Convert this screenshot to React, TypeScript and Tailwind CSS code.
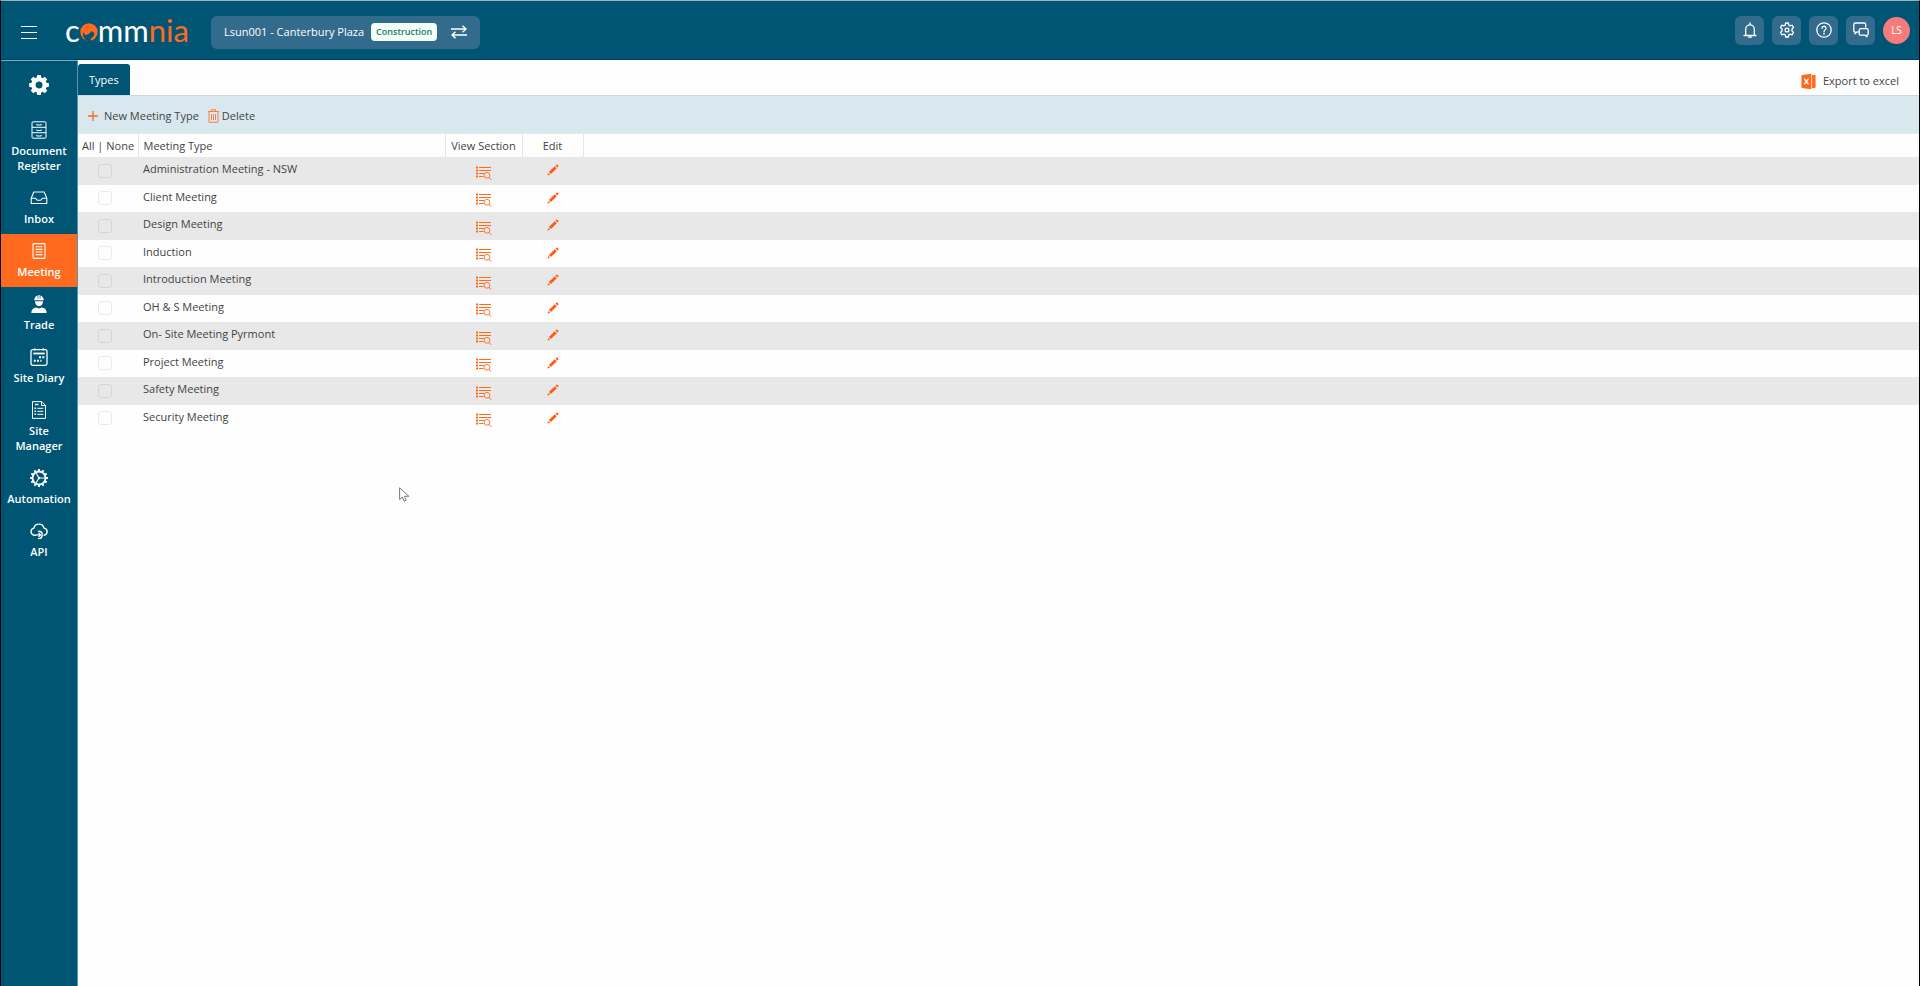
import type { ReactNode } from 'react'
import { RiFileExcel2Fill } from 'react-icons/ri'

interface NavItem { label: string; icon: ReactNode; active?: boolean }

const MEETING_TYPES = [
  'Administration Meeting - NSW',
  'Client Meeting',
  'Design Meeting',
  'Induction',
  'Introduction Meeting',
  'OH & S Meeting',
  'On- Site Meeting Pyrmont',
  'Project Meeting',
  'Safety Meeting',
  'Security Meeting',
]

const TEETH_8 = [0, 45, 90, 135, 180, 225, 270, 315]
const TEETH_12 = [0, 30, 60, 90, 120, 150, 180, 210, 240, 270, 300, 330]

function GearIcon() {
  return (
    <svg viewBox="0 0 20 20" className="size-5" fill="none" stroke="currentColor">
      <circle cx="10" cy="10" r="5.6" strokeWidth="4.2" />
      {TEETH_8.map(a => <path key={a} d="M7.6 3.4 8.2 0.1h3.6L12.4 3.4z" fill="currentColor" stroke="none" transform={`rotate(${a} 10 10)`} />)}
    </svg>
  )
}

function CabinetIcon() {
  return (
    <svg viewBox="0 0 18 18" className="size-[18px]" fill="none" stroke="currentColor" strokeWidth="1">
      <rect x="2" y="0.8" width="14" height="16.4" rx="1" />
      <path d="M2 6.3h14M2 11.7h14M6.8 3v1h4.4V3M6.8 8.5v1h4.4v-1M6.8 14v1h4.4v-1" />
    </svg>
  )
}

function InboxIcon() {
  return (
    <svg viewBox="0 0 18 18" className="size-[18px]" fill="none" stroke="currentColor" strokeWidth="1.1" strokeLinejoin="round">
      <path d="M3.8 3h10.4l2.6 6.2v5.3H1.2V9.2z" />
      <path d="M1.2 9.2h4.3c.4 0 .5.3.6.7.3 1 .9 1.4 1.7 1.4h2.4c.8 0 1.4-.4 1.7-1.4.1-.4.2-.7.6-.7h4.3" />
    </svg>
  )
}

function MeetingIcon() {
  return (
    <svg viewBox="0 0 18 18" className="size-[18px]" fill="none" stroke="currentColor" strokeWidth="1.1">
      <rect x="3" y="1.6" width="12" height="14.8" rx="0.8" />
      <path d="M5.6 4.8h6.8M5.6 7.4h6.8M5.6 10h6.8M5.6 12.6h6.8" />
    </svg>
  )
}

function TradeIcon() {
  return (
    <svg viewBox="0 0 18 18" className="size-[18px]" fill="currentColor">
      <path d="M4.2 5.2C4.3 2.8 5.7 1 7.6.5v3h.7V0h1.4v3.5h.7v-3c1.9.5 3.300 2.300 3.400 4.700z" />
      <path d="M5 6.300h8c0 2.700-1.600 4.900-4 4.900s-4-2.200-4-4.900z" />
      <path d="M1.300 18c0-3.300 2-5.200 5.200-5.400.7.5 1.500.8 2.500.8s1.800-.3 2.500-.8c3.200.2 5.200 2.100 5.200 5.400z" />
    </svg>
  )
}

function DiaryIcon() {
  return (
    <svg viewBox="0 0 18 18" className="size-[18px]" fill="none" stroke="currentColor" strokeWidth="1.3">
      <rect x="1" y="1.7" width="16" height="15.6" rx="1.8" />
      <path d="M3.3 5.500h11.400" strokeWidth="1.8" />
      <path d="M4.800 0v2.600M13.200 0v2.600" strokeWidth="1" />
      <path d="M9 9.200h2M12.300 9.200h2M3.800 12.700h2M7 12.700h2M10.300 12.700h1.200" strokeWidth="1.9" />
    </svg>
  )
}

function SiteManagerIcon() {
  return (
    <svg viewBox="0 0 18 18" className="size-[18px]" fill="none" stroke="currentColor" strokeWidth="1">
      <path d="M2.500.6h9.300l3.700 3.700v13.100h-13zM11.500.6v4h4" />
      <path d="M7.300 7.300h6M7.300 10.300h6M7.300 13.300h6" />
      <path d="M4.400 7.300h1.700M4.400 10.300h1.700M4.400 13.300h1.700M5 3.500h3.500" strokeWidth="1.5" />
    </svg>
  )
}

function AutomationIcon() {
  return (
    <svg viewBox="0 0 18 18" className="size-[18px]" fill="none" stroke="currentColor">
      <circle cx="9" cy="9" r="6.5" strokeWidth="1.9" />
      {TEETH_12.map(a => <path key={a} d="M9 .1v2" strokeWidth="2" transform={`rotate(${a} 9 9)`} />)}
      <circle cx="9" cy="9" r="1.2" fill="currentColor" stroke="none" />
      <path d="M9 9h5.500M9 9 6.200 4.200M9 9l-2.800 4.800" strokeWidth="1.1" />
    </svg>
  )
}

function ApiIcon() {
  return (
    <svg viewBox="0 0 18 18" className="size-[18px]" fill="none" stroke="currentColor" strokeWidth="1.4" strokeLinecap="round">
      <path d="M5.800 13.200H4.300A3.600 3.600 0 0 1 3.900 6.100 5.200 5.200 0 0 1 14 6.100a3.600 3.600 0 0 1 .2 7.100" />
      <path d="M8.600 9.300c2.300 0 3.600 1.300 3.600 3.400s-1.300 3.800-3.600 3.800" />
      <path d="M6.600 12.900h3.800M8.900 11.200l1.700 1.700-1.700 1.700" strokeWidth="1.2" />
    </svg>
  )
}

const NAV: NavItem[] = [
  { label: 'Document Register', icon: <CabinetIcon /> },
  { label: 'Inbox', icon: <InboxIcon /> },
  { label: 'Meeting', icon: <MeetingIcon />, active: true },
  { label: 'Trade', icon: <TradeIcon /> },
  { label: 'Site Diary', icon: <DiaryIcon /> },
  { label: 'Site Manager', icon: <SiteManagerIcon /> },
  { label: 'Automation', icon: <AutomationIcon /> },
  { label: 'API', icon: <ApiIcon /> },
]

const HEADER_ACTIONS: { label: string; icon: ReactNode }[] = [
  {
    label: 'Notifications',
    icon: <path d="M2 13.500h12M3.700 13.300V7.200a4.300 4.300 0 0 1 8.600 0v6.100M8 1v1.700M6.700 15.200h2.600" />,
  },
  {
    label: 'Settings',
    icon: (
      <>
        <path d="M6.700 1h2.600l.4 2 1.500.9 2-.7 1.300 2.300-1.500 1.400v2.200l1.500 1.400-1.300 2.300-2-.7-1.500.9-.4 2H6.700l-.4-2-1.500-.9-2 .7-1.300-2.300L3 9.100V6.900L1.500 5.500l1.300-2.300 2 .7L6.300 3z" />
        <circle cx="8" cy="8" r="1.9" />
      </>
    ),
  },
  {
    label: 'Help',
    icon: (
      <>
        <circle cx="8" cy="8" r="7.2" />
        <path d="M6 6.300a2 2 0 1 1 3 1.700c-.7.400-1 .8-1 1.600M8 11.200v1" />
      </>
    ),
  },
  {
    label: 'Messages',
    icon: (
      <>
        <path d="M5.300 10H3.900L2 11.700V10A1.500 1.500 0 0 1 .8 8.500V2.600A1.600 1.600 0 0 1 2.400 1h8.700a1.600 1.600 0 0 1 1.600 1.600v2.500" />
        <path d="M7.700 6.700h6a1.500 1.500 0 0 1 1.500 1.500v3.500a1.500 1.500 0 0 1-1.200 1.400v1.700l-2-1.600H7.700a1.500 1.500 0 0 1-1.500-1.500V8.200a1.500 1.500 0 0 1 1.500-1.500z" />
      </>
    ),
  },
]

function Logo() {
  return (
    <a href="#home" aria-label="commnia" className="flex items-center font-[Lato,sans-serif] text-[31px] leading-8 text-white">
      <span>c</span>
      <svg viewBox="0 0 18 18" className="mt-1 size-[18px]">
        <circle cx="9" cy="9" r="8.7" fill="#ff6a1f" />
        <path d="M3.200 9.500c.8.300 1.200 1.300 1.700 2.200.9.500 1.800.3 2.300-.3 1.600-.5 3.400-1.700 4-3.400.8.800 1.800 1.300 3 1.700.3 2.800-.9 4.600-2.700 5.300-.7.300-.8 1.400-.8 2.700-3 .6-5-.3-6-2-1.500-1.800-2-4-1.500-6.200z" fill="#005574" />
      </svg>
      <span>mm</span>
      <span className="text-[#ff6a1f]">nia</span>
    </a>
  )
}

function Header() {
  return (
    <header className="flex h-[59px] items-center border-b border-[#00405f] bg-[#005574] pr-[9px] pl-5">
      <button type="button" aria-label="Menu" className="mt-1 flex w-4 flex-col gap-[5px] text-white">
        <span className="h-px bg-current" />
        <span className="h-px bg-current" />
        <span className="h-px bg-current" />
      </button>
      <div className="ml-7 w-[146px]"><Logo /></div>
      <div className="mt-1 flex h-[33px] items-center rounded-md bg-[#336b8d] px-[13px] text-white">
        <span className="font-medium">Lsun001 - Canterbury Plaza</span>
        <span className="ml-[7px] rounded-[4px] bg-[#f3fdf9] px-[5px] text-[9px] leading-[18px] font-semibold text-[#1c7c5c]">Construction</span>
        <button type="button" aria-label="Switch project" className="ml-[14px]">
          <svg viewBox="0 0 16 14" className="h-[14px] w-4" fill="none" stroke="currentColor" strokeWidth="1.5">
            <path d="M0 4h15M11.500.7 15 4l-3.500 3.300M16 10H1M4.500 6.700 1 10l3.500 3.300" />
          </svg>
        </button>
      </div>
      <div className="ml-auto flex items-center gap-2">
        {HEADER_ACTIONS.map(a => (
          <button key={a.label} type="button" aria-label={a.label} className="flex size-[29px] items-center justify-center rounded-md bg-[#336b8d] text-white">
            <svg viewBox="0 0 16 16" className="size-4" fill="none" stroke="currentColor" strokeWidth="1.3" strokeLinecap="round" strokeLinejoin="round">{a.icon}</svg>
          </button>
        ))}
        <button type="button" className="size-[27px] rounded-full bg-[#f47c7c] text-[10px] font-medium text-white">LS</button>
      </div>
    </header>
  )
}

function Sidebar() {
  return (
    <nav className="w-[77px] shrink-0 border-t border-r border-t-[#7fa9b8] border-r-[#5c93ac] bg-[#005574] text-white">
      <button type="button" aria-label="Configuration" className="flex h-[52px] w-full items-center justify-center pb-1">
        <GearIcon />
      </button>
      {NAV.map(item => (
        <a
          key={item.label}
          href="#module"
          aria-current={item.active ? 'page' : undefined}
          className={`flex flex-col items-center gap-1 px-1 py-2 ${item.active ? 'bg-[#ff6a1f]' : ''}`}
        >
          {item.icon}
          <span className="text-center leading-[15px] font-semibold">{item.label}</span>
        </a>
      ))}
    </nav>
  )
}

function Toolbar() {
  return (
    <div className="flex h-[39px] items-center gap-[9px] border-y border-t-[#c9d8de] border-b-[#e3e9ec] bg-[#d9e8ee] pt-[2px] pl-[10px]">
      <button type="button" className="flex items-center gap-[6px]">
        <svg viewBox="0 0 10 10" className="size-[10px] text-[#ff6a1f]" stroke="currentColor" strokeWidth="1.3">
          <path d="M5 0v10M0 5h10" />
        </svg>
        New Meeting Type
      </button>
      <button type="button" className="flex items-center gap-[3px]">
        <svg viewBox="0 0 11 14" className="h-[14px] w-[11px] text-[#ff7f3f]" fill="none" stroke="currentColor">
          <path d="M0 2.500h11M3.500 2.300V.7h4v1.600M1 2.700v10.600h9V2.700" />
          <path d="M3.500 5v6M5.500 5v6M7.500 5v6" />
        </svg>
        Delete
      </button>
    </div>
  )
}

function ViewSectionIcon() {
  return (
    <svg viewBox="0 0 16 14" className="h-[14px] w-4" fill="none" stroke="currentColor" strokeWidth="1">
      <path d="M3 1.500h12M3 4.500h12M3 7.500h5M3 10.500h4.500" />
      <path d="M0 1.500h2M0 4.500h2M0 7.500h2M0 10.500h2" strokeWidth="2" />
      <circle cx="11" cy="9.3" r="2.9" strokeWidth="0.9" />
      <path d="m13 11.500 2.200 2.200" />
    </svg>
  )
}

function PencilIcon() {
  return (
    <svg viewBox="0 0 12 12" className="size-3" fill="currentColor">
      <path d="M.5 11.500 1.200 8.900 3.100 10.800zM1.900 8.100 7.800 2.200 9.800 4.200 3.900 10.100zM8.500 1.500l1-1c.5-.5 2.500 1.500 2 2l-1 1z" />
    </svg>
  )
}

function MeetingTable() {
  return (
    <table className="w-full table-fixed border-collapse text-left">
      <colgroup>
        <col className="w-[60px]" />
        <col className="w-[307px]" />
        <col className="w-[77px]" />
        <col className="w-[61px]" />
        <col />
      </colgroup>
      <thead>
        <tr className="h-[23px]">
          <th className="border-r border-[#e6e6ea] py-0 pr-0 pl-1 font-normal whitespace-nowrap">
            <button type="button">All</button> | <button type="button">None</button>
          </th>
          <th className="border-r border-[#e6e6ea] px-[5px] py-0 font-normal">Meeting Type</th>
          <th className="border-r border-[#e6e6ea] p-0 text-center font-normal whitespace-nowrap">View Section</th>
          <th className="border-r border-[#e6e6ea] p-0 text-center font-normal">Edit</th>
          <th className="p-0" />
        </tr>
      </thead>
      <tbody>
        {MEETING_TYPES.map(type => (
          <tr key={type} className="odd:h-7 odd:bg-[#e8e8e8] even:h-[27px]">
            <td className="px-0 pt-0 pb-px">
              <input type="checkbox" aria-label={`Select ${type}`} className="ml-5 block size-[14px] appearance-none rounded-[3px] border border-black/8" />
            </td>
            <td className="px-[5px] pt-0 pb-1">{type}</td>
            <td className="p-0">
              <button type="button" aria-label={`View sections of ${type}`} className="mx-auto mt-[3px] block text-[#ff6a1f]"><ViewSectionIcon /></button>
            </td>
            <td className="px-0 pt-0 pb-[2px]">
              <button type="button" aria-label={`Edit ${type}`} className="mx-auto block text-[#ff5a10]"><PencilIcon /></button>
            </td>
            <td className="p-0" />
          </tr>
        ))}
      </tbody>
    </table>
  )
}

export default function App() {
  return (
    <div className="relative flex min-h-screen flex-col border-x border-t border-x-black border-t-[#9fb0b5] bg-[#fefefe] font-['Open_Sans',sans-serif] text-[11px] leading-4 text-[#444]">
      <Header />
      <div className="flex flex-1">
        <Sidebar />
        <main className="min-w-0 flex-1">
          <div className="flex h-[35px] items-end justify-between">
            <button type="button" className="h-[31px] rounded-t-[3px] bg-[#005574] px-[11px] font-medium text-white">Types</button>
            <button type="button" className="mr-5 flex h-7 items-center gap-[6px]">
              <RiFileExcel2Fill className="size-[17px] text-[#ff6a1f]" />
              Export to excel
            </button>
          </div>
          <Toolbar />
          <MeetingTable />
        </main>
      </div>
      <svg viewBox="0 0 11 15" className="pointer-events-none absolute top-[486px] left-[398px] h-[15px] w-[11px]" fill="#fff" stroke="#6b6b78" strokeWidth="0.9">
        <path d="M.6.8v11.700l2.700-2.500 1.900 4.200 2-.9-1.800-4h4.500z" />
      </svg>
    </div>
  )
}
